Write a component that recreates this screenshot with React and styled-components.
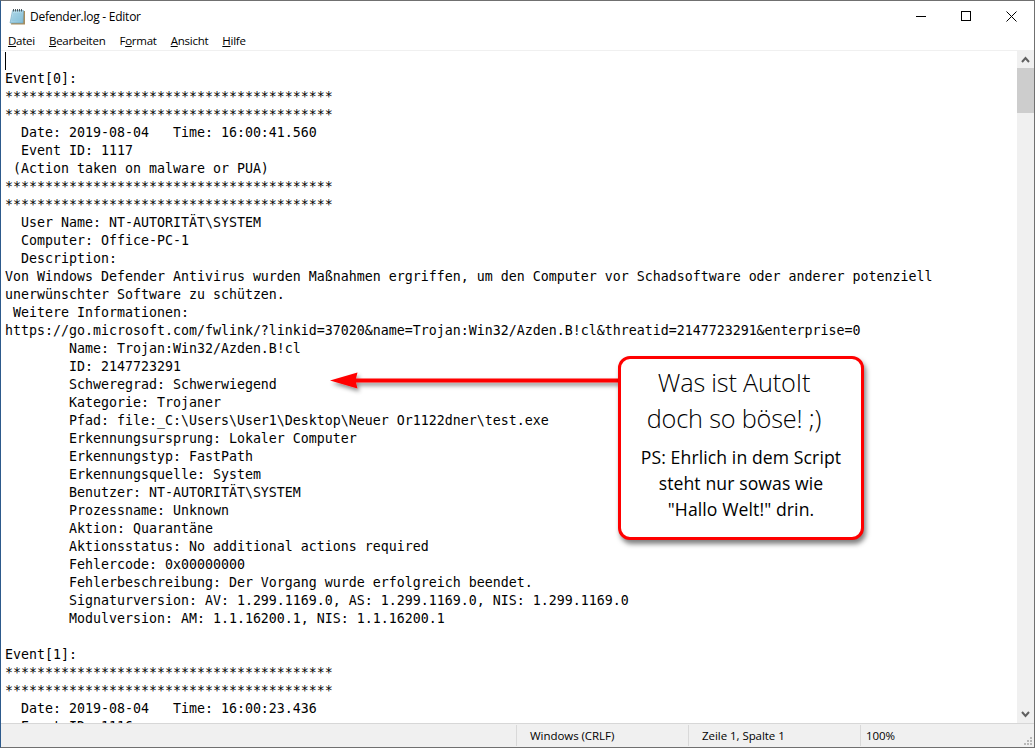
import React from 'react';
import styled, { createGlobalStyle } from 'styled-components';

const stars = '*'.repeat(41);

const logText = `
Event[0]:
${stars}
${stars}
  Date: 2019-08-04   Time: 16:00:41.560
  Event ID: 1117
 (Action taken on malware or PUA)
${stars}
${stars}
  User Name: NT-AUTORITÄT\\SYSTEM
  Computer: Office-PC-1
  Description:
Von Windows Defender Antivirus wurden Maßnahmen ergriffen, um den Computer vor Schadsoftware oder anderer potenziell
unerwünschter Software zu schützen.
 Weitere Informationen:
https://go.microsoft.com/fwlink/?linkid=37020&name=Trojan:Win32/Azden.B!cl&threatid=2147723291&enterprise=0
\tName: Trojan:Win32/Azden.B!cl
\tID: 2147723291
\tSchweregrad: Schwerwiegend
\tKategorie: Trojaner
\tPfad: file:_C:\\Users\\User1\\Desktop\\Neuer Or1122dner\\test.exe
\tErkennungsursprung: Lokaler Computer
\tErkennungstyp: FastPath
\tErkennungsquelle: System
\tBenutzer: NT-AUTORITÄT\\SYSTEM
\tProzessname: Unknown
\tAktion: Quarantäne
\tAktionsstatus: No additional actions required
\tFehlercode: 0x00000000
\tFehlerbeschreibung: Der Vorgang wurde erfolgreich beendet.
\tSignaturversion: AV: 1.299.1169.0, AS: 1.299.1169.0, NIS: 1.299.1169.0
\tModulversion: AM: 1.1.16200.1, NIS: 1.1.16200.1

Event[1]:
${stars}
${stars}
  Date: 2019-08-04   Time: 16:00:23.436
  Event ID: 1116
`;

const menus = [
  { before: '', key: 'D', after: 'atei' },
  { before: '', key: 'B', after: 'earbeiten' },
  { before: 'F', key: 'o', after: 'rmat' },
  { before: '', key: 'A', after: 'nsicht' },
  { before: '', key: 'H', after: 'ilfe' },
];

const App = () => (
  <Window>
    <GlobalStyle />
    <TitleBar>
      <NotepadIcon />
      <TitleText>Defender.log - Editor</TitleText>
      <WindowButtons>
        <WindowButton>
          <svg width="10" height="10" viewBox="0 0 10 10"><path d="M0 5.5h10" stroke="#000" fill="none" /></svg>
        </WindowButton>
        <WindowButton>
          <svg width="10" height="10" viewBox="0 0 10 10"><rect x=".5" y=".5" width="9" height="9" stroke="#000" fill="none" /></svg>
        </WindowButton>
        <WindowButton $wide>
          <svg width="11" height="11" viewBox="0 0 11 11"><path d="M.5.5l10 10M10.5.5l-10 10" stroke="#000" fill="none" /></svg>
        </WindowButton>
      </WindowButtons>
    </TitleBar>
    <MenuBar>
      {menus.map((m) => (
        <MenuItem key={m.key}>{m.before}<u>{m.key}</u>{m.after}</MenuItem>
      ))}
    </MenuBar>
    <Editor>
      <TextArea>
        <Caret />
        <LogText>{logText}</LogText>
      </TextArea>
      <ScrollBar>
        <ScrollArrow>
          <svg width="9" height="7" viewBox="0 0 9 7"><path d="M1 6l3.5-4L8 6" stroke="#606060" strokeWidth="2" fill="none" /></svg>
        </ScrollArrow>
        <ScrollTrack>
          <ScrollThumb />
        </ScrollTrack>
        <ScrollArrow>
          <svg width="9" height="7" viewBox="0 0 9 7"><path d="M1 1l3.5 4L8 1" stroke="#606060" strokeWidth="2" fill="none" /></svg>
        </ScrollArrow>
      </ScrollBar>
    </Editor>
    <StatusBar>
      <StatusSpacer />
      <StatusCell $width={172} $pad={13}>Windows (CRLF)</StatusCell>
      <StatusCell $width={172} $pad={13}>Zeile 1, Spalte 1</StatusCell>
      <StatusCell $width={50} $pad={5}>100%</StatusCell>
      <Grip>
        <svg width="12" height="12" viewBox="0 0 12 12" fill="#b8b8b8">
          <rect x="8" y="2" width="2" height="2" />
          <rect x="5" y="5" width="2" height="2" />
          <rect x="8" y="5" width="2" height="2" />
          <rect x="2" y="8" width="2" height="2" />
          <rect x="5" y="8" width="2" height="2" />
          <rect x="8" y="8" width="2" height="2" />
        </svg>
      </Grip>
    </StatusBar>

    <ArrowDrawing width="300" height="40" viewBox="0 0 300 40">
      <defs>
        <filter id="arrowShadow" x="-5%" y="-50%" width="110%" height="250%">
          <feDropShadow dx="2" dy="3" stdDeviation="2" floodColor="#000" floodOpacity="0.45" />
        </filter>
      </defs>
      <path d="M290 13.5H27l1.5-6L1 15.5l27.5 8-1.5-6h263z" fill="#f00" filter="url(#arrowShadow)" />
    </ArrowDrawing>

    <Callout>
      <CalloutTitle>Was ist AutoIt<br />doch so böse! ;)</CalloutTitle>
      <CalloutBody>PS: Ehrlich in dem Script<br />steht nur sowas wie<br />"Hallo Welt!" drin.</CalloutBody>
    </Callout>
  </Window>
);

const NotepadIcon = () => (
  <IconSvg width="17" height="17" viewBox="0 0 17 17">
    <defs>
      <linearGradient id="pageFill" x1="0" y1="0" x2="1" y2="1">
        <stop offset="0" stopColor="#c6e6f2" />
        <stop offset="1" stopColor="#7fbcd6" />
      </linearGradient>
    </defs>
    <path d="M4 3h12v13.5H2z" fill="#a78d5e" />
    <path d="M3.5 2.5h11l-.5 12.5H1z" fill="url(#pageFill)" stroke="#6fa5bd" strokeWidth="0.6" />
    <path d="M4 6h9M3.6 8h9.4M3.2 10h9.8M2.8 12h10.2" stroke="#8ac2d9" strokeWidth="0.8" />
    <path d="M4.5 1v2.5M6.5 1v2.5M8.5 1v2.5M10.5 1v2.5M12.5 1v2.5" stroke="#4d5a60" strokeWidth="1" />
  </IconSvg>
);

const GlobalStyle = createGlobalStyle`
  html, body {
    margin: 0;
    padding: 0;
    background: #fff;
  }
`;

const Window = styled.div`
  position: relative;
  width: 1035px;
  height: 748px;
  box-sizing: border-box;
  display: flex;
  flex-direction: column;
  overflow: hidden;
  background: #fff;
  border-top: 1px solid #707070;
  border-left: 1px solid #2d5a8c;
  border-right: 1px solid #707070;
  border-bottom: 1px solid #707070;
  font-family: "Open Sans", "Noto Sans", sans-serif;
  color: #000;
`;

const TitleBar = styled.div`
  height: 30px;
  flex: none;
  display: flex;
  align-items: center;
  padding-left: 8px;
`;

const IconSvg = styled.svg`
  flex: none;
`;

const TitleText = styled.span`
  margin-left: 4px;
  font-size: 12px;
  letter-spacing: -0.25px;
`;

const WindowButtons = styled.div`
  margin-left: auto;
  display: flex;
  height: 30px;
`;

const WindowButton = styled.div`
  width: ${(p) => (p.$wide ? 46 : 45)}px;
  display: flex;
  align-items: center;
  justify-content: center;
`;

const MenuBar = styled.div`
  height: 19px;
  flex: none;
  display: flex;
  align-items: center;
  padding-left: 7px;
  gap: 14px;
  font-size: 11.5px;
  letter-spacing: -0.25px;
`;

const MenuItem = styled.span`
  white-space: nowrap;
`;

const Editor = styled.div`
  flex: 1;
  min-height: 0;
  display: flex;
  border-top: 1px solid #f0f0f0;
`;

const TextArea = styled.div`
  position: relative;
  flex: 1;
  min-width: 0;
  overflow: hidden;
  padding: 1px 0 0 4px;
`;

const Caret = styled.div`
  position: absolute;
  left: 4px;
  top: 1px;
  width: 1px;
  height: 18px;
  background: #000;
`;

const LogText = styled.pre`
  margin: 0;
  font-family: "DejaVu Sans Mono", "Liberation Mono", monospace;
  font-size: 13.29px;
  line-height: 18px;
  tab-size: 8;
  white-space: pre;
  color: #000;
`;

const ScrollBar = styled.div`
  width: 17px;
  flex: none;
  display: flex;
  flex-direction: column;
  background: #f0f0f0;
`;

const ScrollArrow = styled.div`
  height: 17px;
  flex: none;
  display: flex;
  align-items: center;
  justify-content: center;
`;

const ScrollTrack = styled.div`
  flex: 1;
`;

const ScrollThumb = styled.div`
  height: 45px;
  background: #cdcdcd;
`;

const StatusBar = styled.div`
  height: 23px;
  flex: none;
  display: flex;
  align-items: center;
  background: #f0f0f0;
  border-top: 1px solid #d7d7d7;
  font-size: 11.5px;
  letter-spacing: -0.05px;
`;

const StatusSpacer = styled.div`
  width: 515px;
  flex: none;
`;

const StatusCell = styled.div`
  width: ${(p) => p.$width}px;
  height: 21px;
  flex: none;
  box-sizing: border-box;
  display: flex;
  align-items: center;
  padding-left: ${(p) => p.$pad}px;
  border-left: 1px solid #d9d9d9;
  white-space: nowrap;
`;

const Grip = styled.div`
  margin-left: auto;
  align-self: flex-end;
  display: flex;
`;

const ArrowDrawing = styled.svg`
  position: absolute;
  left: 328px;
  top: 364px;
  overflow: visible;
`;

const Callout = styled.div`
  position: absolute;
  left: 617px;
  top: 355px;
  width: 246px;
  height: 184px;
  box-sizing: border-box;
  padding-top: 5px;
  background: #fff;
  border: 3px solid #f00;
  border-radius: 12px;
  box-shadow: 2px 4px 5px rgba(0, 0, 0, 0.5);
  text-align: center;
`;

const CalloutTitle = styled.div`
  font-size: 25.3px;
  line-height: 36px;
  font-weight: 300;
  letter-spacing: -0.2px;
  padding-right: 14px;
`;

const CalloutBody = styled.div`
  margin-top: 8px;
  font-size: 17.6px;
  line-height: 26px;
  letter-spacing: 0.1px;
`;

export default App;
